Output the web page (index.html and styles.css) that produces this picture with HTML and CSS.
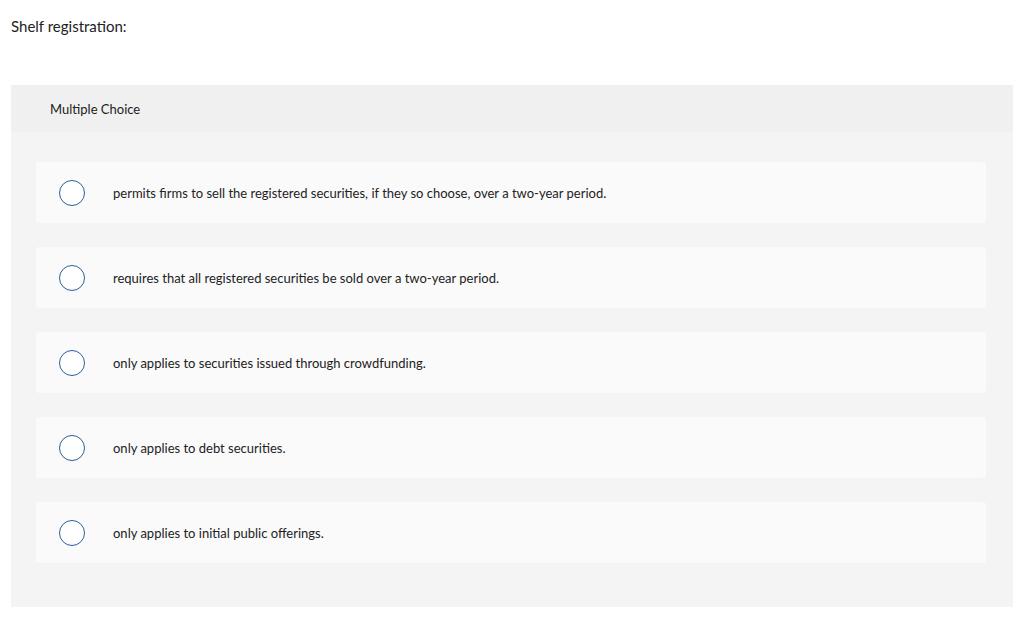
FILE: index.html
```html
<!DOCTYPE html>
<html>
<head>
<meta charset="utf-8">
<link rel="stylesheet" href="styles.css">
</head>
<body>
<div class="page">
  <p class="question">Shelf registration:</p>
  <div class="mc">
    <div class="mc-head">Multiple Choice</div>
    <div class="mc-body">
      <div class="opt"><span class="radio"></span><span class="opt-text">permits firms to sell the registered securities, if they so choose, over a two-year period.</span></div>
      <div class="opt"><span class="radio"></span><span class="opt-text">requires that all registered securities be sold over a two-year period.</span></div>
      <div class="opt"><span class="radio"></span><span class="opt-text">only applies to securities issued through crowdfunding.</span></div>
      <div class="opt"><span class="radio"></span><span class="opt-text">only applies to debt securities.</span></div>
      <div class="opt"><span class="radio"></span><span class="opt-text">only applies to initial public offerings.</span></div>
    </div>
  </div>
</div>
</body>
</html>
```
FILE: styles.css
```css
html, body { margin: 0; padding: 0; background: #fff; }
body { font-family: "Lato", "Liberation Sans", sans-serif; color: #333; }
.page { padding: 0 11px; }
.question { margin: 0; padding-top: 16px; height: 85px; box-sizing: border-box; font-size: 15px; line-height: 20px; color: #222; }
.mc { width: 1002px; }
.mc-head { background: #f0f0f0; height: 47px; box-sizing: border-box; padding-left: 39px; display: flex; align-items: center; font-size: 13px; color: #222; }
.mc-body { background: #f4f4f4; padding: 30px 27px 44px 25px; display: flex; flex-direction: column; gap: 24px; }
.opt { background: #fafafa; height: 61px; border-radius: 3px; display: flex; align-items: center; padding-left: 23px; }
.radio { width: 24px; height: 24px; border: 1px solid #2d5d9c; border-radius: 50%; background: #fff; flex: none; }
.opt-text { margin-left: 28px; font-size: 13px; color: #222; }
```
